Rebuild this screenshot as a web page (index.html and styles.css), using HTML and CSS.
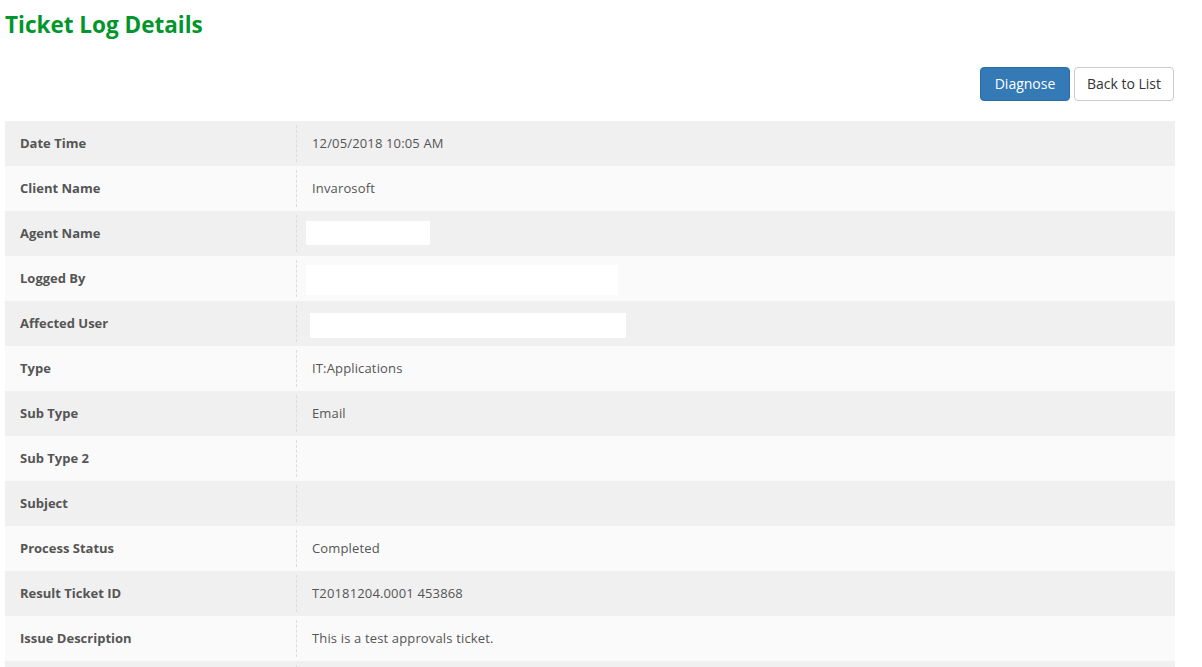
FILE: index.html
```html
<!DOCTYPE html>
<html>
<head>
<meta charset="utf-8">
<link rel="stylesheet" href="styles.css">
</head>
<body>
<div class="page">
  <h1 class="title">Ticket Log Details</h1>
  <div class="actions">
    <button class="btn btn-primary">Diagnose</button>
    <button class="btn btn-default">Back to List</button>
  </div>
  <div class="details">
    <div class="row"><div class="label">Date Time</div><div class="value">12/05/2018 10:05 AM</div></div>
    <div class="row"><div class="label">Client Name</div><div class="value">Invarosoft</div></div>
    <div class="row"><div class="label">Agent Name</div><div class="value"><span class="redact redact-agent"></span></div></div>
    <div class="row"><div class="label">Logged By</div><div class="value"><span class="redact redact-logged"></span></div></div>
    <div class="row"><div class="label">Affected User</div><div class="value"><span class="redact redact-affected"></span></div></div>
    <div class="row"><div class="label">Type</div><div class="value">IT:Applications</div></div>
    <div class="row"><div class="label">Sub Type</div><div class="value">Email</div></div>
    <div class="row"><div class="label">Sub Type 2</div><div class="value"></div></div>
    <div class="row"><div class="label">Subject</div><div class="value"></div></div>
    <div class="row"><div class="label">Process Status</div><div class="value">Completed</div></div>
    <div class="row"><div class="label">Result Ticket ID</div><div class="value">T20181204.0001 453868</div></div>
    <div class="row"><div class="label">Issue Description</div><div class="value">This is a test approvals ticket.</div></div>
    <div class="row"><div class="label"></div><div class="value"></div></div>
  </div>
</div>
</body>
</html>
```

FILE: styles.css
```css
html, body {
  margin: 0;
  padding: 0;
  background: #fff;
  font-family: "Open Sans", "Liberation Sans", sans-serif;
  color: #555;
}
.page {
  padding: 0 27px 0 5px;
}
.title {
  margin: 0;
  padding-top: 10px;
  height: 29px;
  font-size: 22.5px;
  line-height: 29px;
  font-weight: 700;
  color: #00962a;
}
.actions {
  display: flex;
  justify-content: flex-end;
  gap: 4px;
  margin-top: 28px;
  margin-right: 1px;
}
.btn {
  font-family: inherit;
  font-size: 14px;
  height: 34px;
  padding: 0 6px 2px;
  border-radius: 4px;
  white-space: nowrap;
  cursor: pointer;
}
.btn-primary {
  background: #337ab7;
  border: 1px solid #2e6da4;
  color: #fff;
  width: 90px;
}
.btn-default {
  background: #fff;
  border: 1px solid #ccc;
  color: #333;
  width: 100px;
}
.details {
  margin-top: 20px;
}
.row {
  display: grid;
  grid-template-columns: 291px 1fr;
  height: 45px;
  padding: 4px 0;
  box-sizing: border-box;
  background: #f0f0f0;
}
.row:nth-child(even) {
  background: #fafafa;
}
.label {
  padding-left: 15px;
  padding-bottom: 2px;
  font-size: 13px;
  font-weight: 700;
  display: flex;
  align-items: center;
}
.value {
  border-left: 1px dashed #dcdcdc;
  padding-left: 15px;
  padding-bottom: 2px;
  font-size: 13px;
  letter-spacing: 0.15px;
  display: flex;
  align-items: center;
  position: relative;
}
.redact {
  position: absolute;
  background: #fff;
}
.redact-agent { left: 9px; top: 6px; width: 124px; height: 24px; }
.redact-logged { left: 9px; top: 5px; width: 312px; height: 30px; }
.redact-affected { left: 13px; top: 8px; width: 316px; height: 25px; }
```
